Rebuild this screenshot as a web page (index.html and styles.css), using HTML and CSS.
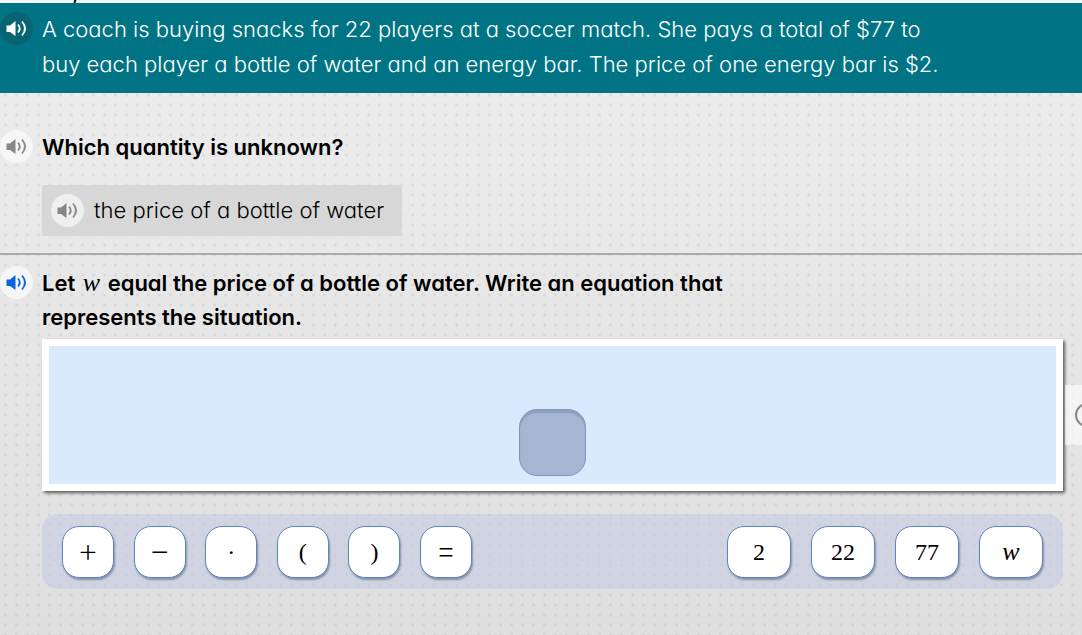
FILE: index.html
```html
<!doctype html>
<html lang="en">
  <head>
    <meta charset="UTF-8" />
    <meta name="viewport" content="width=device-width, initial-scale=1.0" />
    <title>Write an Equation</title>
    <link rel="stylesheet" href="styles.css">
  </head>
  <body>
    <svg class="sprite" aria-hidden="true">
      <symbol id="speaker" viewBox="0 0 33 33">
        <path d="M6.500 13.500h3.500l5.500-4.500v15l-5.500-4H6.500z" fill="currentColor" />
        <path d="M18 12.500q3.500 4 0 8M22 9.500q6 7 0 14" fill="none" stroke="currentColor" stroke-width="1.800" />
      </symbol>
    </svg>

    <div class="top-strip"><span>,</span></div>

    <header class="banner row">
      <button class="audio audio-dark" type="button" aria-label="Read the problem aloud">
        <svg><use href="#speaker" /></svg>
      </button>
      <p>
        A coach is buying snacks for 22 players at a soccer match. She pays a total of $77 to<br>
        buy each player a bottle of water and an energy bar. The price of one energy bar is $2.
      </p>
    </header>

    <main>
      <section class="question-done">
        <div class="row">
          <button class="audio" type="button" aria-label="Read the question aloud">
            <svg><use href="#speaker" /></svg>
          </button>
          <h2>Which quantity is unknown?</h2>
        </div>
        <div class="answer">
          <button class="audio" type="button" aria-label="Read the answer aloud">
            <svg><use href="#speaker" /></svg>
          </button>
          <span>the price of a bottle of water</span>
        </div>
      </section>

      <section class="question-active">
        <div class="row">
          <button class="audio audio-active" type="button" aria-label="Read the question aloud">
            <svg><use href="#speaker" /></svg>
          </button>
          <h2>
            Let <i class="math">w</i> equal the price of a bottle of water. Write an equation that<br>
            represents the situation.
          </h2>
        </div>

        <div class="workspace">
          <button class="slot" type="button" aria-label="Empty slot"></button>
        </div>

        <div class="tray">
          <div class="keys operators">
            <button class="thin" type="button">+</button>
            <button class="thin" type="button">−</button>
            <button type="button">·</button>
            <button type="button">(</button>
            <button type="button">)</button>
            <button class="thin" type="button">=</button>
          </div>
          <div class="keys numbers">
            <button type="button">2</button>
            <button type="button">22</button>
            <button type="button">77</button>
            <button type="button"><i class="math">w</i></button>
          </div>
        </div>
      </section>
    </main>

    <button class="side-tab" type="button" aria-label="Open tools">
      <svg viewBox="0 0 28 28"><circle cx="14" cy="14" r="11" /></svg>
    </button>
  </body>
</html>
```
FILE: styles.css
```css
* {
  box-sizing: border-box;
}
body {
  margin: 0;
  min-height: 100vh;
  overflow: hidden;
  font-family: Inter, "Noto Sans", sans-serif;
  font-feature-settings: "cv11";
  font-size: 22px;
  line-height: 34px;
  color: #000;
  background-color: #e6e6e6;
  background-image:
    radial-gradient(circle, rgba(0, 0, 0, 0.06) 1px, transparent 2px),
    linear-gradient(#eeeeee, #dfdfdf);
  background-size: 11px 10px, 100% 100%;
}
p,
h2 {
  margin: 0;
  font-size: 22px;
}
h2 {
  font-weight: 600;
}
button {
  padding: 0;
  border: none;
  font: inherit;
  color: inherit;
  cursor: pointer;
}
.sprite {
  display: none;
}
.row {
  display: flex;
  align-items: flex-start;
  gap: 9px;
}

/* bottom edge of the page title */
.top-strip {
  display: flex;
  align-items: flex-end;
  height: 3px;
  padding-left: 72px;
  overflow: hidden;
  background: #f4f6f6;
}
.top-strip span {
  line-height: 20px;
}

.banner {
  padding: 9px 0 11px;
  color: #fff;
  background: #007484;
}
.banner p {
  font-weight: 300;
  line-height: 35px;
}

.audio {
  flex: none;
  width: 33px;
  height: 33px;
  border-radius: 50%;
  color: #888;
  background: #f6f6f6;
}
.audio svg {
  display: block;
  width: 33px;
  height: 33px;
}
.audio-dark {
  color: #fff;
  background: #086472;
}
.audio-active {
  color: #0b66dd;
}

.question-done {
  padding: 37px 0 17px;
  border-bottom: 2px solid #aaa;
}
.answer {
  display: inline-flex;
  align-items: center;
  gap: 10px;
  margin: 21px 0 0 42px;
  padding: 8px 18px 9px 9px;
  border-radius: 2px;
  background: #d7d7d7;
  vertical-align: top;
}
.answer span {
  font-weight: 300;
}
.answer .audio {
  background: #efefef;
}

.question-active {
  padding: 11px 19px 46px 0;
}
.math {
  font-family: "Liberation Serif", serif;
  font-size: 26px;
  font-weight: 400;
  line-height: 1;
}
h2 .math {
  margin: 0 2px;
}
.workspace {
  display: flex;
  justify-content: center;
  margin: 5px 0 0 42px;
  padding: 63px 0 8px;
  border: 7px solid #fff;
  background: #dae9fd;
  box-shadow: 2px 2px 3px rgba(0, 0, 0, 0.6);
}
.slot {
  width: 67px;
  height: 67px;
  border: 1px solid #7f96bd;
  border-radius: 18px;
  background: #a6b5d1;
  box-shadow: inset 0 3px 1px #8ca0c2;
}

.tray {
  display: flex;
  justify-content: space-between;
  margin: 23px 0 0 42px;
  padding: 12px 20px 11px;
  border-radius: 16px;
  background: rgba(192, 200, 228, 0.5);
}
.keys {
  display: flex;
  gap: 20px;
}
.keys.operators {
  justify-content: space-between;
  gap: 0;
  width: 410px;
}
.keys button {
  width: 52px;
  height: 52px;
  border: 1px solid #5c86bd;
  border-radius: 17px;
  font-family: "Liberation Serif", serif;
  font-size: 24px;
  background: #fff;
  box-shadow: 1px 2px 2px rgba(60, 80, 120, 0.5);
}
.keys.numbers button {
  width: 64px;
}
.keys button.thin {
  padding-bottom: 4px;
  font-family: Inter, sans-serif;
  font-size: 34px;
  font-weight: 200;
}

/* sits on the right edge of the window, partly out of view */
.side-tab {
  position: fixed;
  top: 385px;
  right: 0;
  width: 17px;
  height: 60px;
  overflow: hidden;
  background: rgba(255, 255, 255, 0.6);
}
.side-tab svg {
  display: block;
  width: 28px;
  height: 28px;
  margin-left: 8px;
  fill: none;
  stroke: #888;
  stroke-width: 2;
}
```
